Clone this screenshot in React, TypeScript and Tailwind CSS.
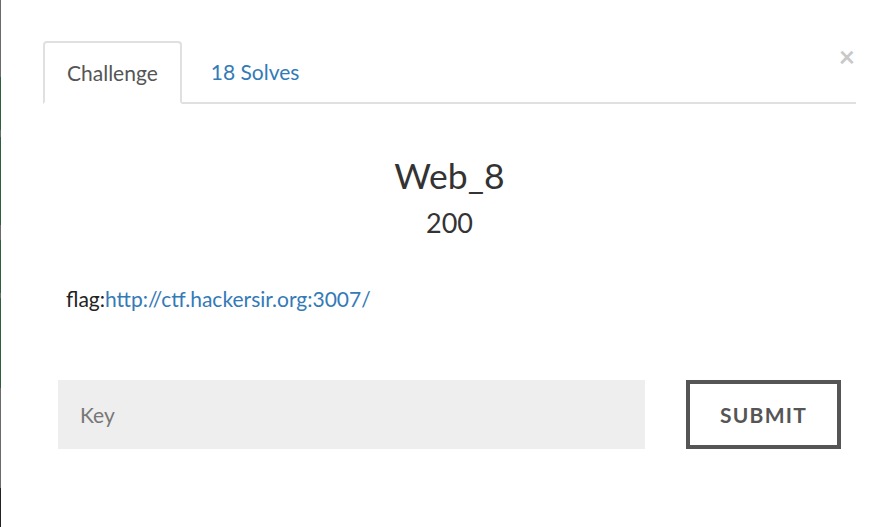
import React from "react";

const edge = [
  { h: 77, c: "bg-[#6b6b6b]" },
  { h: 53, c: "bg-[#2f5d3d]" },
  { h: 7, c: "bg-[#5f6f66]" },
  { h: 88, c: "bg-[#2f5d3d]" },
  { h: 15, c: "bg-[#6b6b6b]" },
  { h: 53, c: "bg-[#2f5d3d]" },
  { h: 5, c: "bg-[#5f6f66]" },
  { h: 90, c: "bg-[#2f5d3d]" },
  { h: 100, c: "bg-[#6b6b6b]" },
  { h: 39, c: "bg-[#222222]" },
];

export default function App() {
  return (
    <div className="flex h-[527px] w-[890px] overflow-hidden bg-white font-['Lato','Open_Sans',sans-serif] text-[#333]">
      {/* window edge behind the modal */}
      <div className="flex w-px flex-col">
        {edge.map((s, i) => (
          <div key={i} className={s.c} style={{ height: s.h }} />
        ))}
      </div>

      <div className="relative flex-1 pl-[42px] pr-[34px] pt-[41px]">
        <button className="absolute right-[35px] top-[42px] text-[28px] font-bold leading-none text-[#c8c8c8]">
          ×
        </button>

        {/* tabs */}
        <div className="flex border-b-2 border-[#e0e0e0]">
          <div className="-mb-[2px] mr-[2px] flex h-[63px] items-center rounded-t-[4px] border-2 border-[#e0e0e0] border-b-white bg-white px-[22px] text-[21px] text-[#555]">
            Challenge
          </div>
          <div className="flex h-[61px] items-center pl-[27px] pr-[24px] text-[21px] text-[#337ab7]">
            18 Solves
          </div>
        </div>

        {/* challenge */}
        <div className="pt-[49px] text-center">
          <h1 className="text-[35.5px] leading-[46px] text-[#333]">Web_8</h1>
          <div className="mt-[8px] text-[27px] leading-[32px]">200</div>
        </div>

        <p className="mt-[47px] pl-[23px] text-[21px] leading-[26px] text-[#222]">
          flag:<a className="text-[#337ab7]">http://ctf.hackersir.org:3007/</a>
        </p>

        <div className="mt-[68px] flex items-stretch justify-between px-[15px]">
          <div className="flex h-[69px] w-[587px] items-center bg-[#eeeeee] px-[22px] text-[21px] text-[#777]">
            Key
          </div>
          <button className="flex h-[69px] w-[155px] items-center justify-center border-4 border-[#555] bg-white text-[21px] font-bold tracking-[0.06em] text-[#555]">
            SUBMIT
          </button>
        </div>
      </div>
    </div>
  );
}
